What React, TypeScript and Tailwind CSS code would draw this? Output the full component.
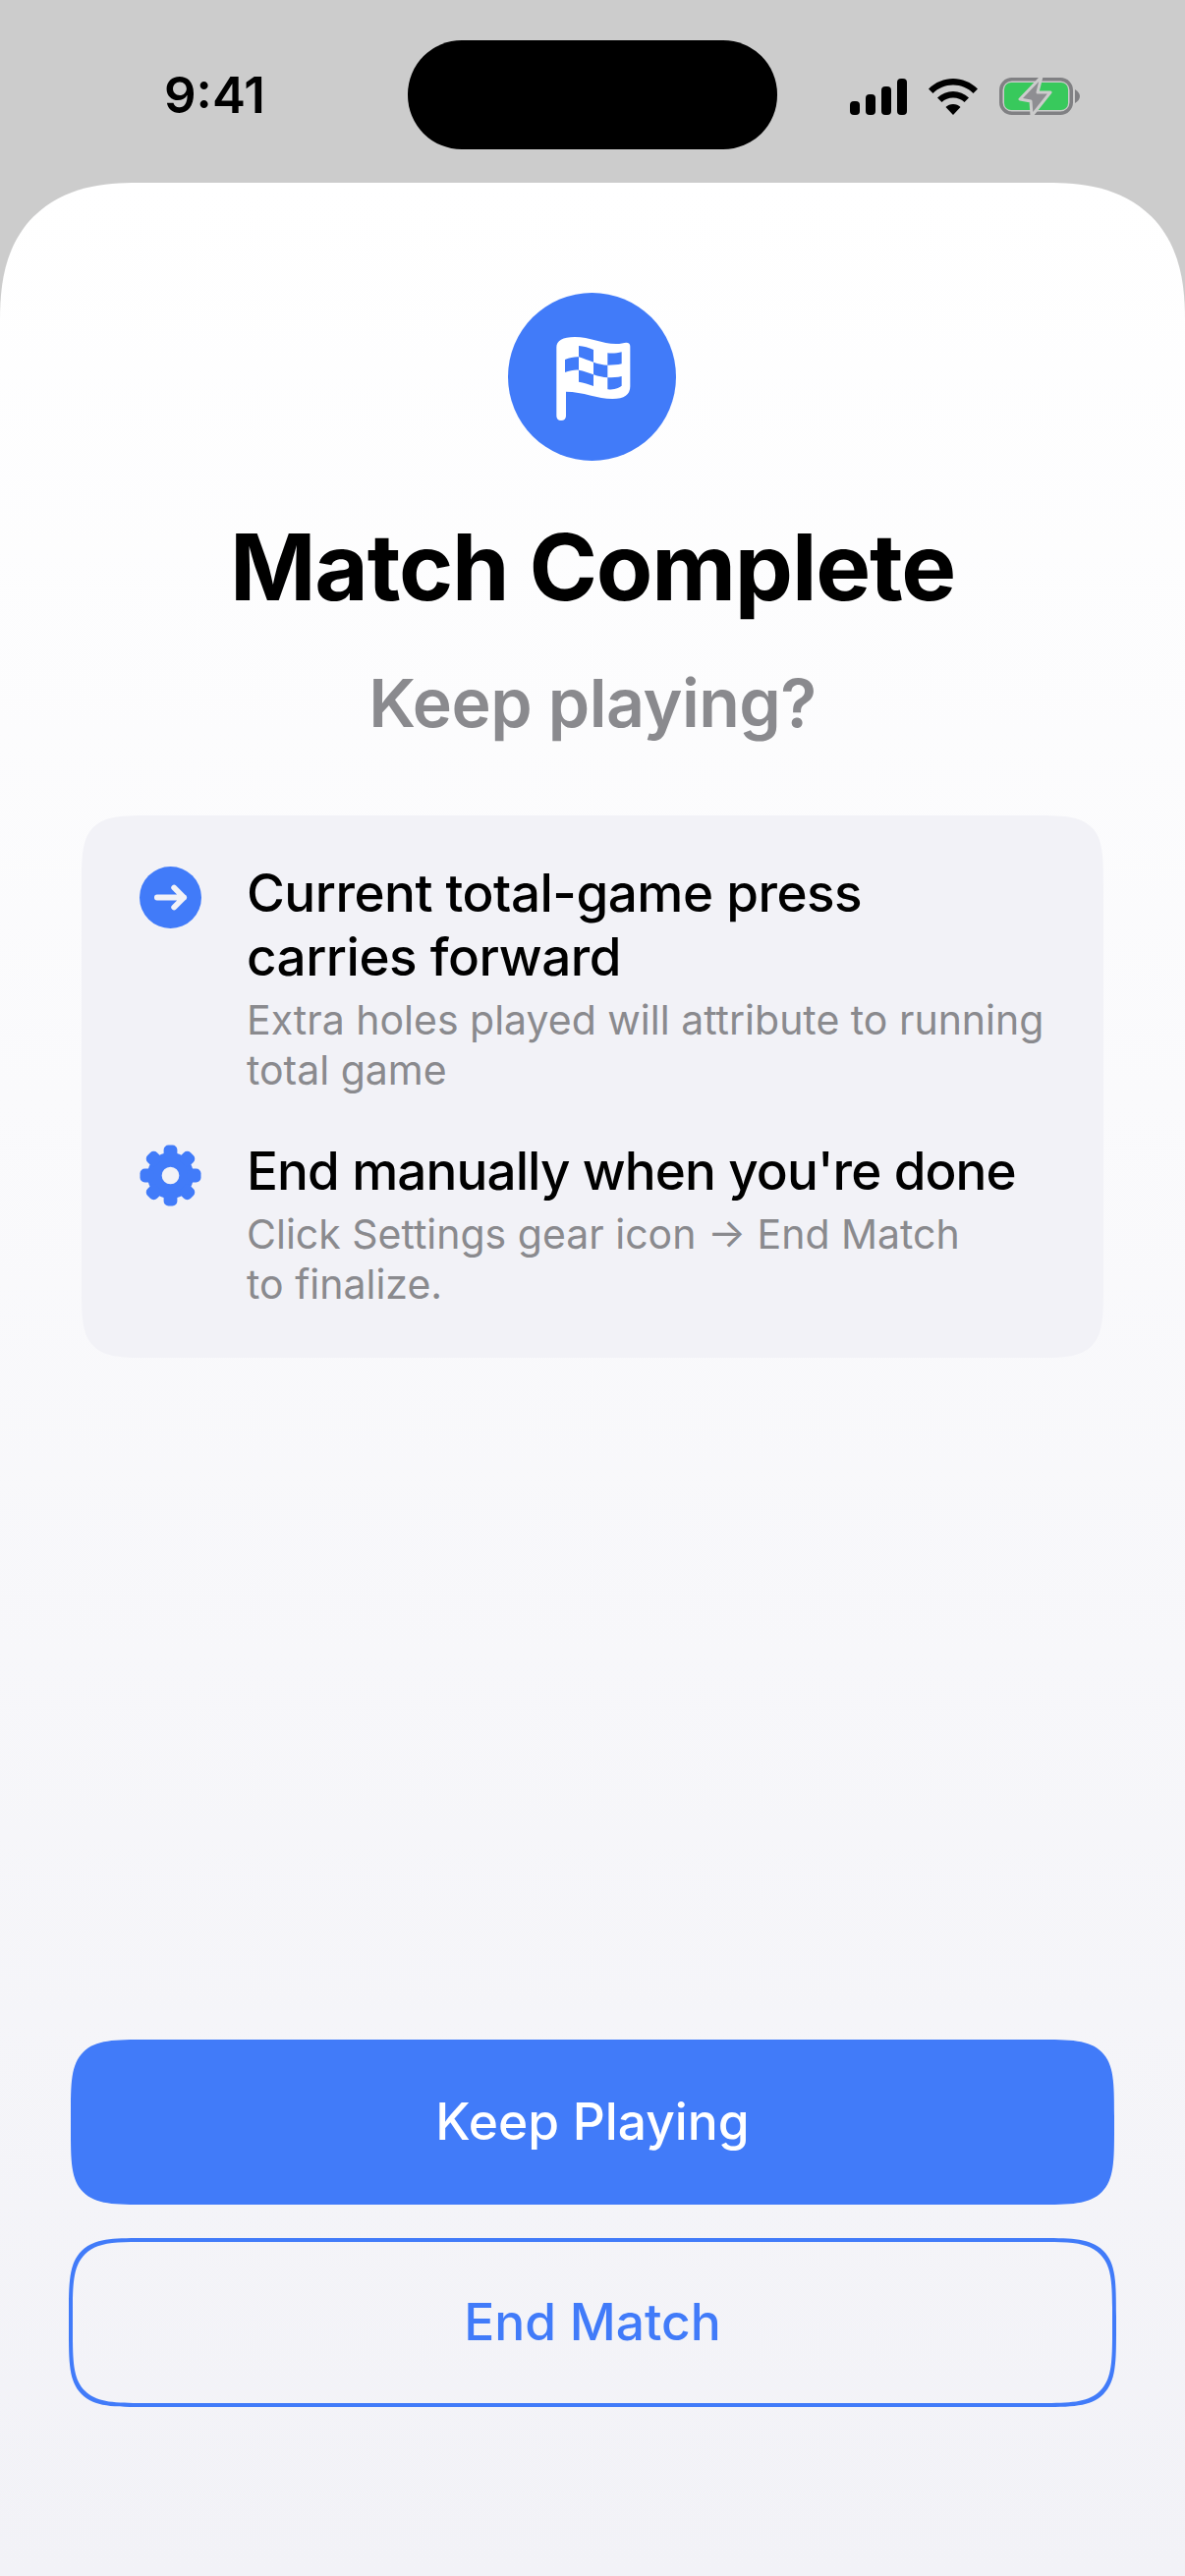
const font = { fontFamily: 'Inter, sans-serif' }

function FlagIcon() {
  return (
    <svg viewBox="111 84 513 513" className="size-full">
      <path
        fill="#fff"
        fillRule="evenodd"
        d="M259 250Q259 220 315 219C360 219 400 240 440 240C455 240 465 236 472 236Q484 236 484 248L484 370Q484 408 430 408C385 408 340 386 288 386L288 460Q288 474 273 474Q259 474 259 460ZM285 288C300 282 315 279 327 280L327 320C315 319 298 322 285 327ZM327 246C342 247 358 252 372 258L372 296C358 291 342 285 327 280ZM372 296C387 301 402 304 415 305L415 343C402 342 387 339 372 334ZM415 268C430 270 445 268 458 265L458 301C445 304 430 305 415 305ZM327 320C342 322 358 329 372 334L372 369C358 364 342 358 327 356ZM415 343C430 343 445 342 458 339L458 368C450 376 430 380 415 379Z"
      />
    </svg>
  )
}

function ArrowBadge() {
  return (
    <svg viewBox="0 0 60 60" className="size-full">
      <circle cx="30" cy="30" r="30" fill="#417bf9" />
      <path d="M17 30H43M33.5 20.5L43 30L33.5 39.5" fill="none" stroke="#f2f2f7" strokeWidth="5.5" strokeLinecap="round" strokeLinejoin="round" />
    </svg>
  )
}

function GearIcon() {
  return (
    <svg viewBox="0 0 64 64" className="size-full">
      <circle cx="32" cy="32" r="16.5" fill="none" stroke="#417bf9" strokeWidth="15" />
      {[0, 45, 90, 135, 180, 225, 270, 315].map((a) => (
        <rect key={a} x="25" y="0.5" width="14" height="14" rx="5" fill="#417bf9" transform={`rotate(${a} 32 32)`} />
      ))}
    </svg>
  )
}

function StatusIcons() {
  return (
    <div className="flex items-center gap-[22px]">
      <svg viewBox="0 0 58 37" className="w-[58px] h-[37px]">
        <rect x="0" y="23" width="10" height="14" rx="4" />
        <rect x="16" y="16" width="10" height="21" rx="4" />
        <rect x="32" y="8" width="10" height="29" rx="4" />
        <rect x="48" y="0" width="10" height="37" rx="4" />
      </svg>
      <svg viewBox="0 0 50 37" className="w-[50px] h-[37px]">
        <path d="M25 0C34 0 43 3.500 50 10.500L45.500 15C40 9.500 33 6.500 25 6.500C17 6.500 10 9.500 4.500 15L0 10.500C7 3.500 16 0 25 0Z" />
        <path d="M25 13C31 13 36.500 15.300 41 19.500L36.500 24C33.500 21 29.500 19.500 25 19.500C20.500 19.500 16.500 21 13.500 24L9 19.500C13.500 15.300 19 13 25 13Z" />
        <path d="M25 26C28 26 30.500 27 32.500 29L25 37L17.500 29C19.500 27 22 26 25 26Z" />
      </svg>
      <svg viewBox="0 -1 82 40" className="w-[82px] h-[40px]">
        <rect x="1.750" y="1.750" width="71.500" height="34.500" rx="11" fill="none" stroke="#808083" strokeWidth="3.500" />
        <rect x="5" y="5" width="65" height="28" rx="7" fill="#38c95c" />
        <path d="M77 12C80 14 82 16 82 19C82 22 80 24 77 26Z" fill="#808083" />
        <path d="M43 -1L21 22L32 24L33 39L52 15L39 15Z" fill="#8e8e92" stroke="#cccccc" strokeWidth="3" strokeLinejoin="round" />
      </svg>
    </div>
  )
}

function InfoRow({ icon, title, children }: { icon: React.ReactNode; title: React.ReactNode; children: React.ReactNode }) {
  return (
    <div className="flex">
      <div className="w-[63px] h-[63px] mt-[5px] mr-[46px] shrink-0">{icon}</div>
      <div>
        <div className="text-[53px] leading-[65px] font-medium text-black">{title}</div>
        <div className="mt-[6px] text-[41px] leading-[51px] text-[#8a8a8e]">{children}</div>
      </div>
    </div>
  )
}

export default function App() {
  return (
    <div className="w-[1206px] h-[2622px] flex flex-col bg-[#cccccc] overflow-hidden" style={font}>
      <div className="h-[186px] shrink-0 flex items-start">
        <div className="w-[415px] pt-[65px] pl-[167px] text-[51px] leading-[64px] font-semibold text-black">9:41</div>
        <div className="mt-[41px] w-[376px] h-[111px] rounded-[55px] bg-black" />
        <div className="pt-[78px] pl-[74px]">
          <StatusIcons />
        </div>
      </div>

      <div className="flex-1 flex flex-col items-center rounded-t-[140px] [corner-shape:superellipse(1.3)] bg-gradient-to-b from-white to-[#f2f2f7] pt-[112px] pb-[172px]">
        <div className="w-[171px] h-[171px] mr-[1px] rounded-full bg-[#417bf9]">
          <FlagIcon />
        </div>
        <h1 className="mt-[52px] text-[94px] leading-[112px] font-bold text-black tracking-[-1.2px]">Match Complete</h1>
        <p className="mt-[42px] text-[68px] leading-[80px] font-semibold text-[#8a8a8e] tracking-[-0.5px]">Keep playing?</p>

        <div className="mt-[75px] w-[1040px] h-[552px] rounded-[76px] [corner-shape:squircle] bg-[#f2f2f7] pl-[59px] pt-[47px] flex flex-col gap-[45px]">
          <InfoRow icon={<ArrowBadge />} title={<span className="tracking-[-0.5px]">Current total-game press<br />carries forward</span>}>
            Extra holes played will attribute to running<br />total game
          </InfoRow>
          <InfoRow icon={<GearIcon />} title={<span className="tracking-[-0.9px]">End manually when you're done</span>}>
            Click Settings gear icon → End Match<br />to finalize.
          </InfoRow>
        </div>

        <div className="mt-auto w-[1066px] flex flex-col items-center gap-[34px]">
          <button className="w-[1062px] h-[168px] rounded-[80px] [corner-shape:squircle] bg-[#417bf9] text-white text-[51.5px] font-medium">Keep Playing</button>
          <button className="w-[1066px] h-[172px] rounded-[82px] [corner-shape:squircle] border-[4px] border-[#417bf9] text-[#417bf9] text-[51.5px] font-medium">End Match</button>
        </div>
      </div>
    </div>
  )
}
